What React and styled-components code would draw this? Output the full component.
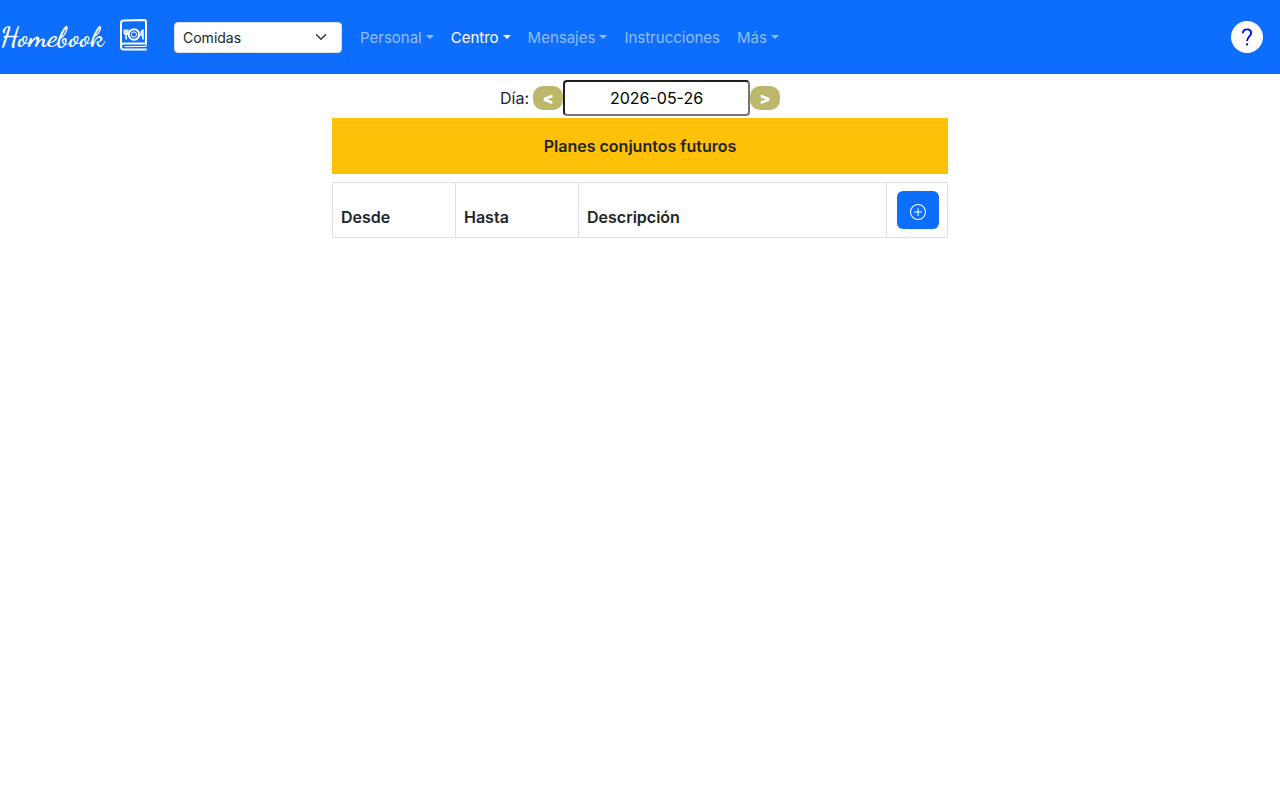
import React, { useState } from 'react';
import styled, { createGlobalStyle } from 'styled-components';
import { BsPlusCircle } from 'react-icons/bs';

const primary = '#0d6efd';
const warning = '#ffc107';
const textColor = '#212529';
const borderColor = '#dee2e6';

const GlobalStyle = createGlobalStyle`
  *, *::before, *::after {
    box-sizing: border-box;
  }

  body {
    margin: 0;
    background: white;
    color: ${textColor};
    font-family: Inter, Roboto, sans-serif;
    font-size: 16px;
    line-height: 24px;
  }

  button, input, select {
    font-family: inherit;
    line-height: inherit;
  }
`;

const Navbar = styled.nav`
  display: flex;
  align-items: center;
  min-height: 74px;
  padding: 8px 17px 8px 0;
  background: ${primary};
`;

const Brand = styled.a`
  display: flex;
  align-items: center;
  gap: 12px;
  width: 174px;
  color: white;
  text-decoration: none;
`;

const BrandName = styled.span`
  width: 106px;
  font-family: 'Dancing Script', cursive;
  font-size: 29px;
  font-weight: 600;
  line-height: 32px;
`;

const BrandIcon = styled.svg`
  flex: none;
  width: 32px;
  height: 36px;
  margin-bottom: 4px;
`;

const SectionSelect = styled.select`
  width: 168px;
  height: 31px;
  margin-right: 10px;
  padding: 4px 36px 4px 8px;
  appearance: none;
  color: ${textColor};
  font-size: 14px;
  line-height: 21px;
  border: 1px solid ${borderColor};
  border-radius: 4px;
  background: white url("data:image/svg+xml,%3csvg xmlns='http://www.w3.org/2000/svg' viewBox='0 0 16 16'%3e%3cpath fill='none' stroke='%23343a40' stroke-linecap='round' stroke-linejoin='round' stroke-width='2' d='m2 5 6 6 6-6'/%3e%3c/svg%3e") no-repeat right 14px center / 12px 12px;
`;

const NavList = styled.ul`
  display: flex;
  flex: 1;
  gap: 1px;
  margin: 0;
  padding: 0;
  list-style: none;
`;

const NavLink = styled.a`
  display: block;
  padding: 9px 8px 7px;
  color: ${({ $active }) => ($active ? 'white' : 'rgba(255, 255, 255, 0.55)')};
  font-size: 15px;
  text-decoration: none;
  white-space: nowrap;
`;

const Caret = styled.span`
  display: inline-block;
  margin-left: 4px;
  vertical-align: 4px;
  border-top: 4px solid;
  border-right: 4px solid transparent;
  border-left: 4px solid transparent;
`;

const HelpLink = styled.a`
  display: flex;
  align-items: center;
  justify-content: center;
  width: 32px;
  height: 32px;
  border-radius: 50%;
  background: white;
  color: #0000ee;
`;

const Content = styled.main`
  width: 50%;
  margin: 0 auto;
  padding: 6px 12px;
`;

const DayRow = styled.div`
  display: flex;
  align-items: center;
  justify-content: center;
  margin-bottom: 2px;
`;

const DayLabel = styled.label`
  margin-right: 4px;
`;

const DayInput = styled.input`
  width: 187px;
  height: 36px;
  padding: 4px;
  color: black;
  font-size: 16px;
  text-align: center;
  border: 2px solid;
  border-color: #212121 #767676 #767676 #212121;
  border-radius: 4px;
  background: white;
`;

const DayButton = styled.button`
  width: 30px;
  height: 24px;
  padding: 0;
  border: none;
  border-radius: 10px;
  background: darkkhaki;
  color: white;
  font-size: 16px;
  font-weight: 900;
`;

const Banner = styled.div`
  margin-bottom: 8px;
  padding: 16px;
  background: ${warning};
  font-weight: 600;
  text-align: center;
`;

const PlansTable = styled.table`
  width: 100%;
  table-layout: fixed;
  border-collapse: collapse;
`;

const HeadCell = styled.th`
  width: ${({ $width }) => $width};
  padding: 8px;
  border: 1px solid ${borderColor};
  font-weight: 600;
  text-align: ${({ $align }) => $align || 'left'};
  vertical-align: bottom;
`;

const AddButton = styled.button`
  display: inline-flex;
  align-items: center;
  justify-content: center;
  width: 42px;
  height: 38px;
  padding: 4px 0 0;
  border: none;
  border-radius: 6px;
  background: ${primary};
  color: white;
  vertical-align: top;
`;

const links = [
  { label: 'Personal', menu: true },
  { label: 'Centro', menu: true, active: true },
  { label: 'Mensajes', menu: true },
  { label: 'Instrucciones' },
  { label: 'Más', menu: true },
];

const shiftDay = (day, amount) => {
  const date = new Date(`${day}T00:00:00Z`);
  if (Number.isNaN(date.getTime())) return day;
  date.setUTCDate(date.getUTCDate() + amount);
  return date.toISOString().slice(0, 10);
};

const BookIcon = () => (
  <BrandIcon viewBox="0 0 32 36" fill="none" stroke="white" strokeWidth="2" strokeLinecap="round" strokeLinejoin="round" aria-hidden="true">
    <path d="M3 30V6c0-1.500 1-2.500 2.500-2.500L26 3c1.200 0 2 .8 2 2v21.500H5.500C3.800 26.500 3 27.800 3 29.500s.8 3 2.500 3H28" />
    <path d="M28 26.500v3M7 29.700l20-.3" strokeWidth="1" />
    <circle cx="16" cy="17.500" r="5.200" strokeWidth="2" />
    <circle cx="16" cy="17.500" r="2.600" strokeWidth="1" />
    <path d="M6.300 13v3c0 2 3.600 2 3.600 0v-3M8.100 13v9" strokeWidth="1.500" />
    <path d="M25 22V13c-1.600 1-2 3.500-1.800 5.500H25" strokeWidth="1.500" />
  </BrandIcon>
);

const App = () => {
  const [section, setSection] = useState('Comidas');
  const [day, setDay] = useState('2026-05-26');

  return (
    <>
      <GlobalStyle />
      <Navbar>
        <Brand href="#">
          <BrandName>Homebook</BrandName>
          <BookIcon />
        </Brand>
        <SectionSelect aria-label="Sección" value={section} onChange={(e) => setSection(e.target.value)}>
          <option>Comidas</option>
        </SectionSelect>
        <NavList>
          {links.map((link) => (
            <li key={link.label}>
              <NavLink href="#" $active={link.active}>
                {link.label}
                {link.menu && <Caret />}
              </NavLink>
            </li>
          ))}
        </NavList>
        <HelpLink href="#" aria-label="Ayuda">
          <svg width="20" height="20" viewBox="0 0 20 20" fill="none" stroke="currentColor" strokeWidth="1.800" aria-hidden="true">
            <path d="M5.800 6.200C6 3.700 7.700 2.400 10 2.400s4.200 1.400 4.200 3.700c0 3.200-4.100 3.700-4.100 7.900" />
            <path d="M10.100 16.300v2" strokeWidth="2" />
          </svg>
        </HelpLink>
      </Navbar>

      <Content>
        <DayRow>
          <DayLabel htmlFor="day">Día:</DayLabel>
          <DayButton type="button" onClick={() => setDay(shiftDay(day, -1))}>&lt;</DayButton>
          <DayInput id="day" type="text" value={day} onChange={(e) => setDay(e.target.value)} />
          <DayButton type="button" onClick={() => setDay(shiftDay(day, 1))}>&gt;</DayButton>
        </DayRow>

        <Banner>Planes conjuntos futuros</Banner>

        <PlansTable>
          <thead>
            <tr>
              <HeadCell $width="20%">Desde</HeadCell>
              <HeadCell $width="20%">Hasta</HeadCell>
              <HeadCell $width="50%">Descripción</HeadCell>
              <HeadCell $width="10%" $align="right">
                <AddButton type="button" aria-label="Añadir plan">
                  <BsPlusCircle size={16} />
                </AddButton>
              </HeadCell>
            </tr>
          </thead>
        </PlansTable>
      </Content>
    </>
  );
};

export default App;
